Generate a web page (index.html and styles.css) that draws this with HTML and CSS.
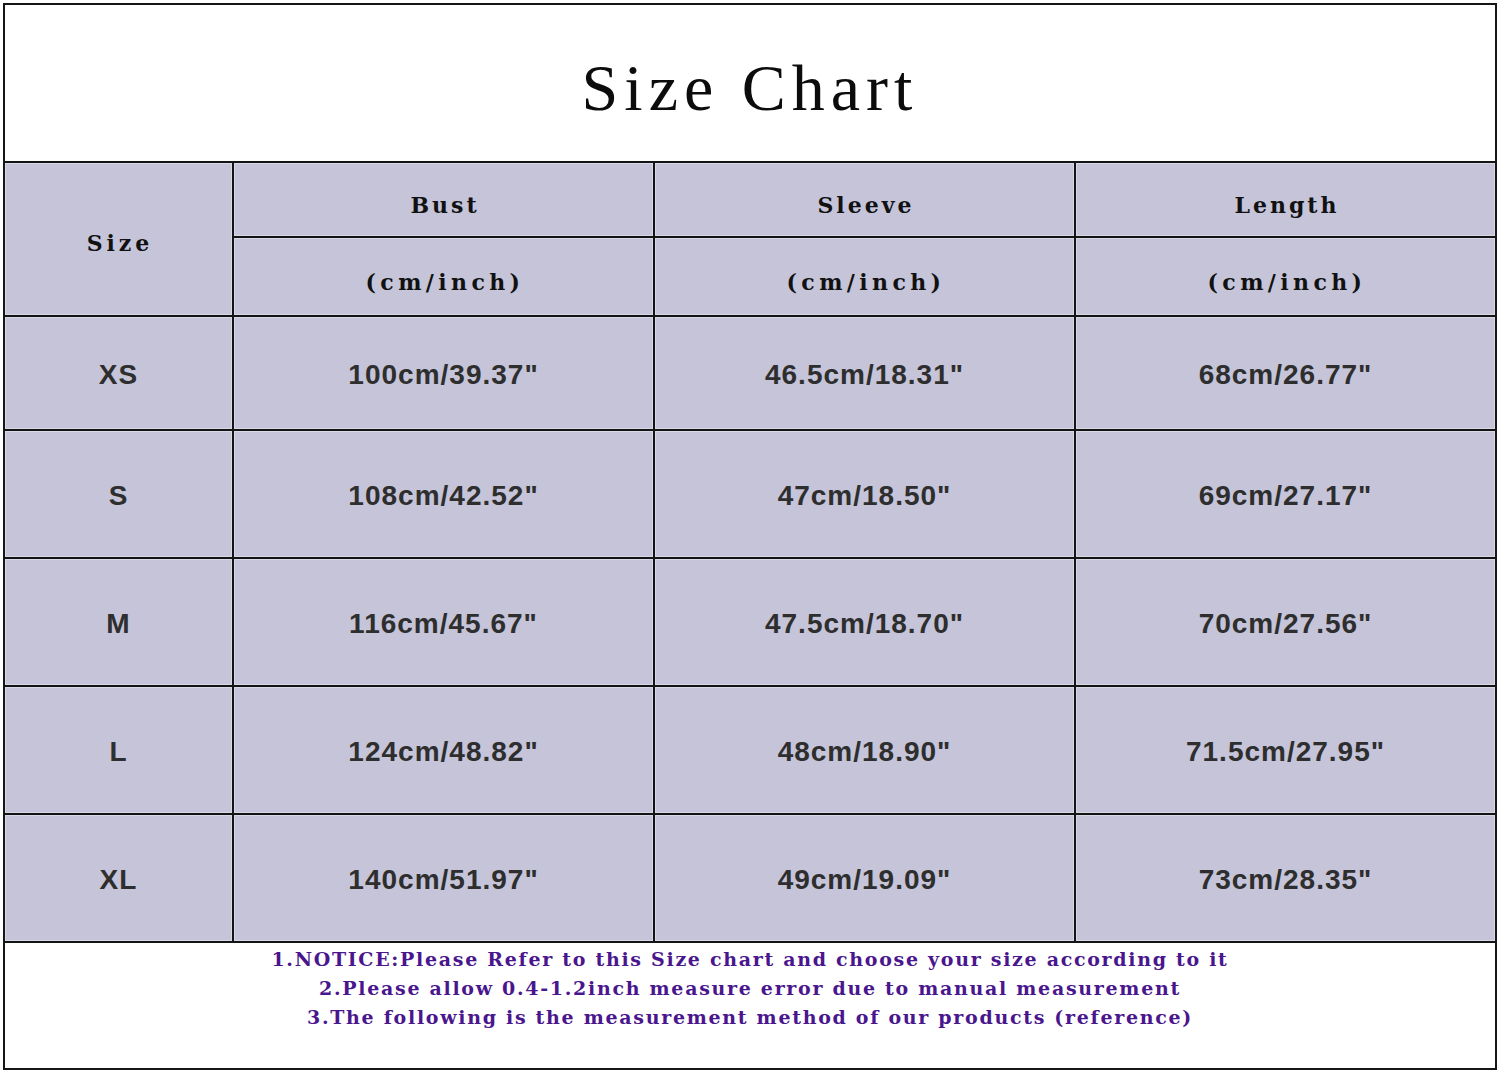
FILE: index.html
```html
<!DOCTYPE html>
<html lang="en">
<head>
<meta charset="utf-8">
<title>Size Chart</title>
<link rel="stylesheet" href="styles.css">
</head>
<body>
<div class="chart">
  <div class="title">Size Chart</div>
  <div class="grid">
    <div class="cell head size-head">Size</div>
    <div class="cell head">Bust</div>
    <div class="cell head">Sleeve</div>
    <div class="cell head">Length</div>
    <div class="cell head unit">(cm/inch)</div>
    <div class="cell head unit">(cm/inch)</div>
    <div class="cell head unit">(cm/inch)</div>

    <div class="cell data">XS</div>
    <div class="cell data">100cm/39.37"</div>
    <div class="cell data">46.5cm/18.31"</div>
    <div class="cell data">68cm/26.77"</div>

    <div class="cell data">S</div>
    <div class="cell data">108cm/42.52"</div>
    <div class="cell data">47cm/18.50"</div>
    <div class="cell data">69cm/27.17"</div>

    <div class="cell data">M</div>
    <div class="cell data">116cm/45.67"</div>
    <div class="cell data">47.5cm/18.70"</div>
    <div class="cell data">70cm/27.56"</div>

    <div class="cell data">L</div>
    <div class="cell data">124cm/48.82"</div>
    <div class="cell data">48cm/18.90"</div>
    <div class="cell data">71.5cm/27.95"</div>

    <div class="cell data">XL</div>
    <div class="cell data">140cm/51.97"</div>
    <div class="cell data">49cm/19.09"</div>
    <div class="cell data">73cm/28.35"</div>
  </div>
  <div class="notes">
    <p>1.NOTICE:Please Refer to this Size chart and choose your size according to it</p>
    <p>2.Please allow 0.4-1.2inch measure error due to manual measurement</p>
    <p>3.The following is the measurement method of our products (reference)</p>
  </div>
</div>
</body>
</html>
```
FILE: styles.css
```css
html, body {
  margin: 0;
  padding: 0;
  background: #ffffff;
}

.chart {
  margin: 3px 0 0 3px;
  width: 1494px;
  border: 2px solid #161616;
  box-sizing: border-box;
  background: #ffffff;
}

.title {
  height: 156px;
  box-sizing: border-box;
  padding-top: 47px;
  text-align: center;
  font-family: "Liberation Serif", serif;
  font-size: 66px;
  line-height: 72px;
  letter-spacing: 6px;
  color: #0c0c0c;
}

.grid {
  display: grid;
  grid-template-columns: 227px 419px 419px 1fr;
  grid-template-rows: 73px 77px 112px 126px 126px 126px 126px;
  gap: 2px;
  padding: 2px 0;
  background: #141414;
}

.cell {
  background: #c5c4d9;
  box-shadow: inset 0 0 0 1px #d9d8e6;
  display: flex;
  align-items: center;
  justify-content: center;
  color: #1a1a1a;
}

.head {
  font-family: "DejaVu Serif", serif;
  font-weight: bold;
  font-size: 22px;
  letter-spacing: 3px;
  padding-top: 10px;
  padding-left: 3px;
  box-sizing: border-box;
  color: #111111;
}

.unit {
  padding-top: 10px;
  letter-spacing: 4.4px;
}

.size-head {
  grid-row: span 2;
  padding-top: 8px;
  letter-spacing: 4px;
}

.data {
  font-family: "Liberation Sans", Arial, sans-serif;
  font-weight: bold;
  font-size: 28px;
  letter-spacing: 1px;
  padding-top: 4px;
  box-sizing: border-box;
  color: #2e2e2e;
}

.notes {
  height: 125px;
  box-sizing: border-box;
  padding-top: 2px;
  text-align: center;
  font-family: "DejaVu Serif", serif;
  font-weight: bold;
  font-size: 19px;
  line-height: 29px;
  letter-spacing: 1.7px;
  color: #4a168e;
}

.notes p {
  margin: 0;
}
```
